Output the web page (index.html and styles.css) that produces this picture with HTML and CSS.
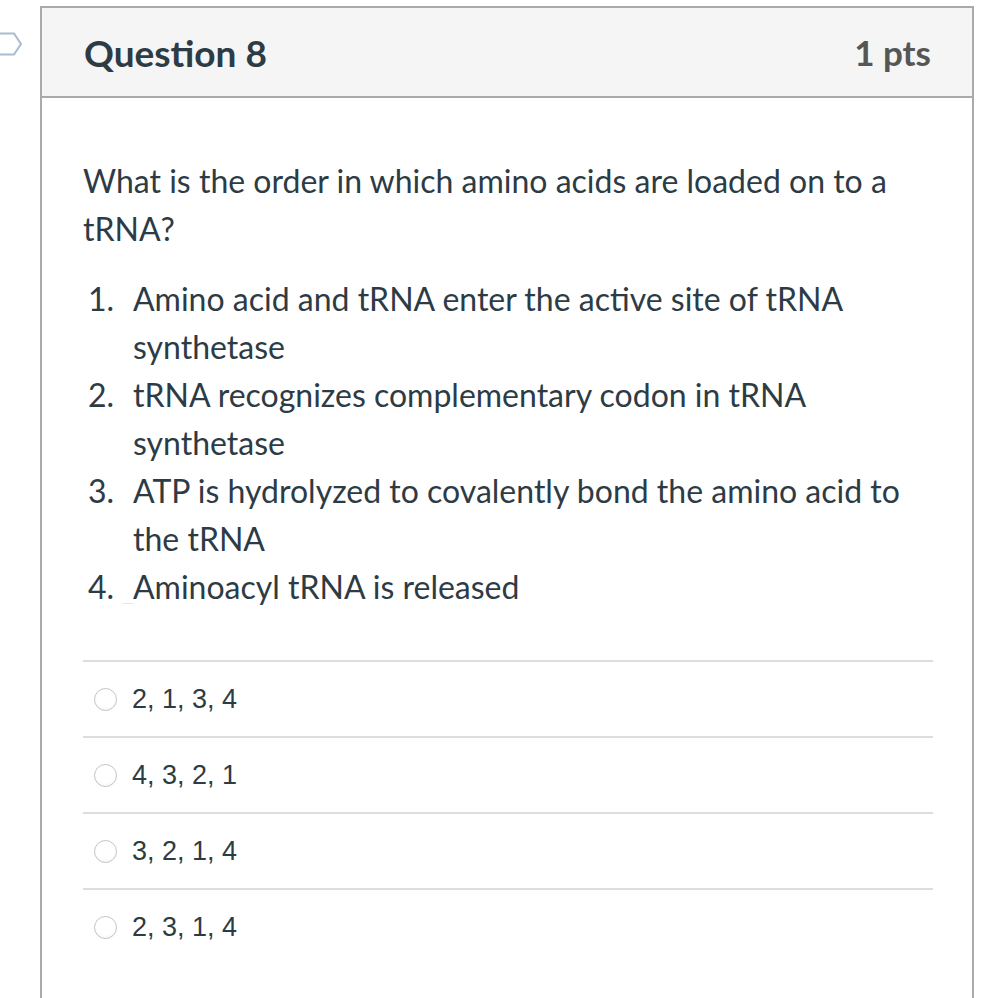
FILE: index.html
```html
<!DOCTYPE html>
<html>
<head>
<meta charset="utf-8">
<link rel="stylesheet" href="styles.css">
</head>
<body>
<div class="page">
  <div class="flag-col">
    <svg class="flag" width="40" height="30" viewBox="0 0 40 30">
      <polygon points="-10,2.5 14,2.5 21,13 14,23.5 -10,23.5" fill="#ffffff" stroke="#a7bcd0" stroke-width="2"/>
    </svg>
  </div>
  <div class="question">
    <div class="q-header">
      <h2 class="q-title">Question 8</h2>
      <div class="q-points">1 pts</div>
    </div>
    <div class="q-body">
      <p class="q-text">What is the order in which amino acids are loaded on to a tRNA?</p>
      <ol class="q-steps">
        <li>Amino acid and tRNA enter the active site of tRNA synthetase</li>
        <li>tRNA recognizes complementary codon in tRNA synthetase</li>
        <li>ATP is hydrolyzed to covalently bond the amino acid to the tRNA</li>
        <li><span class="mark"></span>Aminoacyl tRNA is released</li>
      </ol>
      <div class="answers">
        <label class="answer"><span class="radio"></span><span class="answer-text">2, 1, 3, 4</span></label>
        <label class="answer"><span class="radio"></span><span class="answer-text">4, 3, 2, 1</span></label>
        <label class="answer"><span class="radio"></span><span class="answer-text">3, 2, 1, 4</span></label>
        <label class="answer"><span class="radio"></span><span class="answer-text">2, 3, 1, 4</span></label>
      </div>
    </div>
  </div>
</div>
</body>
</html>
```
FILE: styles.css
```css
html, body {
  margin: 0;
  padding: 0;
  background: #ffffff;
}
body {
  font-family: Lato, "Noto Sans", sans-serif;
  color: #2d3b45;
  overflow: hidden;
  height: 998px;
}
.page {
  display: flex;
  padding-top: 6px;
}
.flag-col {
  width: 40px;
  flex: none;
}
.flag {
  display: block;
  margin-top: 25px;
}
.question {
  width: 930px;
  border: 2px solid #aaaaaa;
  border-bottom: none;
  min-height: 1000px;
}
.q-header {
  height: 88px;
  background: #f5f5f5;
  border-bottom: 2px solid #aaaaaa;
  display: flex;
  align-items: center;
  justify-content: space-between;
  padding: 0 41px 0 42px;
}
.q-title {
  margin: 0;
  font-size: 37px;
  font-weight: 700;
  color: #2d3b45;
}
.q-points {
  font-size: 35px;
  font-weight: 700;
  color: #565656;
}
.q-body {
  padding: 59px 39px 0 41px;
  font-size: 32px;
  line-height: 48px;
}
.q-text {
  margin: 0;
}
.q-steps {
  margin: 22px 0 0 0;
  padding-left: 50px;
  list-style: none;
  counter-reset: step;
}
.q-steps li {
  counter-increment: step;
}
.q-steps li::before {
  content: counter(step) ".";
  display: inline-block;
  width: 45px;
  margin-left: -45px;
}
.mark {
  display: inline-block;
  width: 10px;
  height: 1px;
  background: #dbe7f3;
  margin-left: -10px;
  vertical-align: -5px;
}
.answers {
  margin-top: 49px;
}
.answer {
  display: flex;
  align-items: center;
  height: 74px;
  border-top: 2px solid #dddddd;
  padding-left: 11px;
}
.radio {
  width: 23px;
  height: 23px;
  border-radius: 50%;
  border: 1px solid #c4c4c4;
  box-sizing: border-box;
  background: radial-gradient(circle at 50% 40%, #ffffff 55%, #f0f0f0 100%);
  flex: none;
}
.answer-text {
  margin-left: 15px;
  font-family: "Liberation Sans", Arial, sans-serif;
  font-size: 27px;
  color: #2d3b45;
}
```
